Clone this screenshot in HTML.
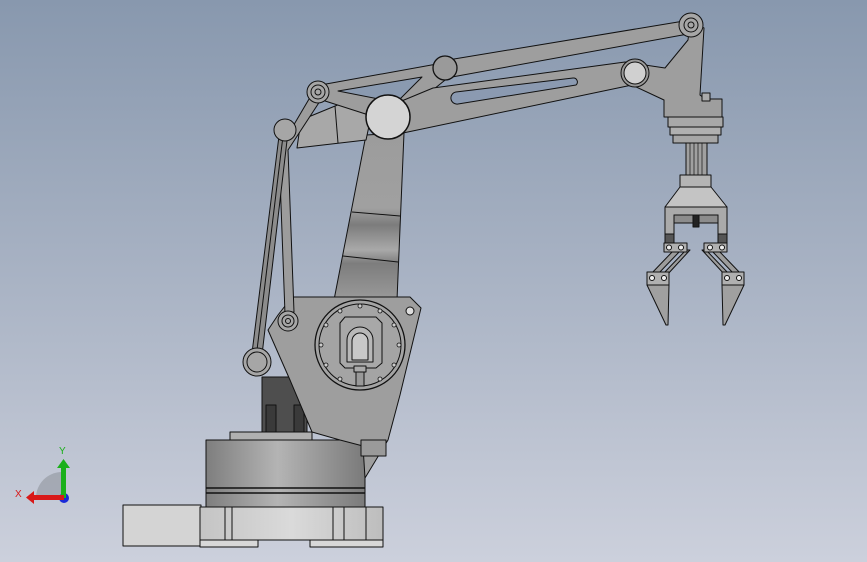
<!DOCTYPE html>
<html><head><meta charset="utf-8"><style>
html,body{margin:0;padding:0;width:867px;height:562px;overflow:hidden}
body{background:linear-gradient(#8898ae,#a9b3c4 50%,#ccd0dc)}
svg{position:absolute;left:0;top:0}
</style></head><body>
<svg width="867" height="562" viewBox="0 0 867 562" xmlns="http://www.w3.org/2000/svg" stroke="#111" stroke-width="1" stroke-linejoin="round">
<defs>
<linearGradient id="cyl" x1="0" x2="1"><stop offset="0" stop-color="#7e7e7e"/><stop offset="0.45" stop-color="#b4b4b4"/><stop offset="1" stop-color="#7a7a7a"/></linearGradient>
<linearGradient id="base" x1="0" x2="1"><stop offset="0" stop-color="#c4c4c4"/><stop offset="0.5" stop-color="#dadada"/><stop offset="1" stop-color="#bdbdbd"/></linearGradient>
<linearGradient id="arm" x1="0" y1="0" x2="0" y2="1"><stop offset="0" stop-color="#9c9c9c"/><stop offset="0.45" stop-color="#a0a0a0"/><stop offset="0.55" stop-color="#7c7c7c"/><stop offset="0.7" stop-color="#a9a9a9"/><stop offset="0.78" stop-color="#7d7d7d"/><stop offset="1" stop-color="#9a9a9a"/></linearGradient>
</defs>
<rect x="123" y="505" width="78" height="41" fill="#d4d4d4"/>
<rect x="200" y="507" width="183" height="33" fill="url(#base)"/>
<rect x="200" y="540" width="58" height="7" fill="#d8d8d8"/>
<rect x="310" y="540" width="73" height="7" fill="#d8d8d8"/>
<path d="M225 507V540M232 507V540M333 507V540M344 507V540M366 507V540" fill="none"/>
<rect x="262" y="377" width="45" height="56" fill="#4e4e4e"/>
<rect x="266" y="405" width="10" height="28" fill="#3a3a3a"/>
<rect x="294" y="405" width="10" height="28" fill="#3a3a3a"/>
<rect x="230" y="432" width="82" height="9" fill="#b0b0b0"/>
<rect x="206" y="440" width="159" height="67" fill="url(#cyl)"/>
<path d="M206 488H365M206 493H365" fill="none" stroke-width="1.5"/>
<path d="M366 135L404 133L397 300L334 300Z" fill="url(#arm)"/>
<path d="M352 212L400 216M343 256L398 262" fill="none"/>
<path d="M297 148L301 120L340 104L372 112L366 140Z" fill="#a8a8a8"/>
<path d="M335 106L338 143" fill="none"/>
<path d="M278 315L292 297L410 297L421 308L400 395L388 440L365 478L363 446L340 440L312 432L290 380L268 330Z" fill="#9e9e9e"/>
<rect x="361" y="440" width="25" height="16" fill="#9a9a9a"/>
<circle cx="410" cy="311" r="4" fill="#ddd"/>
<circle cx="360" cy="345" r="45" fill="#a4a4a4" stroke-width="1.3"/>
<circle cx="360" cy="345" r="41" fill="none"/>
<g fill="#ccc" stroke-width="0.8">
<circle cx="360" cy="306" r="2"/><circle cx="380" cy="311" r="2"/><circle cx="394" cy="325" r="2"/><circle cx="399" cy="345" r="2"/><circle cx="394" cy="365" r="2"/><circle cx="380" cy="379" r="2"/><circle cx="360" cy="384" r="2"/><circle cx="340" cy="379" r="2"/><circle cx="326" cy="365" r="2"/><circle cx="321" cy="345" r="2"/><circle cx="326" cy="325" r="2"/><circle cx="340" cy="311" r="2"/>
</g>
<path d="M340 323L345 317L376 317L382 323L382 363L376 368L345 368L340 363Z" fill="#a8a8a8"/>
<path d="M347 362V340A13 13 0 0 1 373 340V362Z" fill="#b8b8b8"/>
<path d="M352 360V341A8 8 0 0 1 368 341V360Z" fill="#c8c8c8"/>
<rect x="354" y="366" width="12" height="6" fill="#aaa"/>
<rect x="356" y="372" width="8" height="14" fill="#999"/>
<path d="M312 94L322 98L288 150L294 312L285 314L279 150Z" fill="#9c9c9c"/>
<path d="M280 128L288 132L262 355L252 353Z" fill="#8c8c8c"/>
<path d="M283 136L257 350" fill="none"/>
<circle cx="285" cy="130" r="11" fill="#a6a6a6"/>
<circle cx="288" cy="321" r="10" fill="#a6a6a6"/><circle cx="288" cy="321" r="6" fill="none"/><circle cx="288" cy="321" r="2.5" fill="none"/>
<circle cx="257" cy="362" r="14" fill="#a6a6a6"/><circle cx="257" cy="362" r="10" fill="none"/>
<path d="M315 86L448 62L455 72L402 115L378 118L322 100Z" fill="#9d9d9d"/>
<path d="M338 91L422 77L395 104L384 100Z" fill="#8a9ab0"/>
<path d="M448 60L684 21L688 34L452 77Z" fill="#9e9e9e"/>
<path d="M433 88L625 62L665 68L688 40L690 22L704 28L700 95L705 99L722 99L722 117L664 117L664 100L632 85L403 133L392 105Z" fill="#9e9e9e"/>
<path d="M456 92L573 78A4 4 0 0 1 576 85L458 104A5 5 0 0 1 456 92Z" fill="#8b9ab1"/>
<rect x="702" y="93" width="8" height="8" fill="#aaa"/>
<circle cx="318" cy="92" r="11" fill="#a6a6a6"/><circle cx="318" cy="92" r="7" fill="none"/><circle cx="318" cy="92" r="3" fill="none"/>
<circle cx="445" cy="68" r="12" fill="#9a9a9a" stroke-width="1.3"/>
<circle cx="388" cy="117" r="22" fill="#d4d4d4" stroke-width="1.5"/>
<circle cx="635" cy="73" r="14" fill="#999"/><circle cx="635" cy="73" r="11" fill="#d0d0d0"/>
<circle cx="691" cy="25" r="12" fill="#a6a6a6"/><circle cx="691" cy="25" r="7" fill="none"/><circle cx="691" cy="25" r="3" fill="none"/>
<rect x="668" y="117" width="55" height="10" fill="#a8a8a8"/>
<rect x="670" y="127" width="51" height="8" fill="#b0b0b0"/>
<rect x="673" y="135" width="45" height="8" fill="#a6a6a6"/>
<rect x="686" y="143" width="21" height="33" fill="#a0a0a0"/>
<path d="M690 143V176M694 143V176M698 143V176M702 143V176" fill="none" stroke-width="0.7"/>
<rect x="680" y="175" width="31" height="12" fill="#b4b4b4"/>
<path d="M680 187H711L727 207H665Z" fill="#c4c4c4"/>
<path d="M665 207H727V250H718V215H674V250H665Z" fill="#aaa"/>
<rect x="674" y="215" width="44" height="8" fill="#8c8c8c"/>
<rect x="693" y="215" width="6" height="12" fill="#222"/>
<rect x="665" y="234" width="9" height="9" fill="#555"/>
<rect x="718" y="234" width="9" height="9" fill="#555"/>
<path d="M674 250L650 275L657 275L681 250ZM686 250L662 275L667 275L690 250Z" fill="#9c9c9c"/>
<rect x="664" y="243" width="23" height="9" fill="#b0b0b0"/>
<circle cx="669" cy="247.5" r="2.5" fill="#eee"/><circle cx="681" cy="247.5" r="2.5" fill="#eee"/>
<rect x="647" y="272" width="22" height="13" fill="#b0b0b0"/>
<circle cx="652" cy="278" r="2.5" fill="#eee"/><circle cx="664" cy="278" r="2.5" fill="#eee"/>
<path d="M647 285H669L668 325H666Z" fill="#a0a0a0"/>
<path d="M718 250L742 275L735 275L711 250ZM706 250L730 275L725 275L702 250Z" fill="#9c9c9c"/>
<rect x="704" y="243" width="23" height="9" fill="#b0b0b0"/>
<circle cx="710" cy="247.5" r="2.5" fill="#eee"/><circle cx="722" cy="247.5" r="2.5" fill="#eee"/>
<rect x="722" y="272" width="22" height="13" fill="#b0b0b0"/>
<circle cx="727" cy="278" r="2.5" fill="#eee"/><circle cx="739" cy="278" r="2.5" fill="#eee"/>
<path d="M722 285H744L725 325H723Z" fill="#a0a0a0"/>
<g stroke="none">
<path d="M36 498A26 26 0 0 1 62 472V498Z" fill="#8f949c" opacity="0.6"/>
<circle cx="64" cy="498" r="5" fill="#1a2ad8"/>
<rect x="61" y="466" width="5" height="32" fill="#1bb01b"/>
<path d="M57 468L63.5 459L70 468Z" fill="#1bb01b"/>
<rect x="32" y="495" width="32" height="5" fill="#d81818"/>
<path d="M34 491L26 497.5L34 504Z" fill="#d81818"/>
</g>
<text x="59" y="454" font-family="Liberation Sans,sans-serif" font-size="10" fill="#1bb01b" stroke="none">Y</text>
<text x="15" y="497" font-family="Liberation Sans,sans-serif" font-size="10" fill="#d81818" stroke="none">X</text>
</svg>
</body></html>
